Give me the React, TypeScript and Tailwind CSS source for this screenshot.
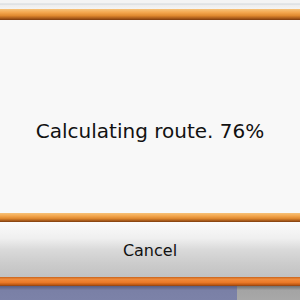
import React from 'react';

const OrangeBar: React.FC<{ h: string; top?: boolean }> = ({ h, top }) => (
  <div
    className={`${h} w-full ${
      top
        ? 'bg-[linear-gradient(to_bottom,#f6c27a_0%,#f4a850_30%,#e08a30_60%,#a85a1a_85%,#7a3c10_100%)]'
        : 'bg-[linear-gradient(to_bottom,#c8641c_0%,#f08a3a_25%,#ec7a28_60%,#c05a14_85%,#8a4010_100%)]'
    }`}
  />
);

export default function App() {
  return (
    <div className="w-[300px] h-[300px] flex flex-col overflow-hidden font-['DejaVu_Sans',sans-serif] bg-[#f7f7f7]">
      {/* top strip */}
      <div className="h-[9px] bg-[linear-gradient(to_bottom,#f4f4f4_0%,#f4f4f4_30%,#d8dce0_45%,#eeeeee_60%,#f4f4f4_100%)]" />
      <OrangeBar h="h-[11px]" top />

      {/* message */}
      <div className="h-[193px] flex items-center justify-center bg-[#f8f8f8] pt-[29px]">
        <span className="text-[20px] leading-none text-[#111]">Calculating route. 76%</span>
      </div>

      <OrangeBar h="h-[9px]" top />

      {/* cancel button */}
      <div className="h-[55px] flex items-center justify-center pt-[2px] bg-[linear-gradient(to_bottom,#fbfbfb_0%,#efefef_30%,#dadada_50%,#cccccc_75%,#c2c2c2_100%)]">
        <span className="text-[16px] leading-none text-[#111]">Cancel</span>
      </div>

      <OrangeBar h="h-[9px]" />

      {/* bottom strip */}
      <div className="flex-1 flex">
        <div className="w-[237px] bg-[linear-gradient(to_bottom,#5a5e80_0%,#7a80a6_30%,#7c82a8_100%)]" />
        <div className="flex-1 bg-[linear-gradient(to_bottom,#707070_0%,#a4a4a4_30%,#a8a8a8_100%)]" />
      </div>
    </div>
  );
}
